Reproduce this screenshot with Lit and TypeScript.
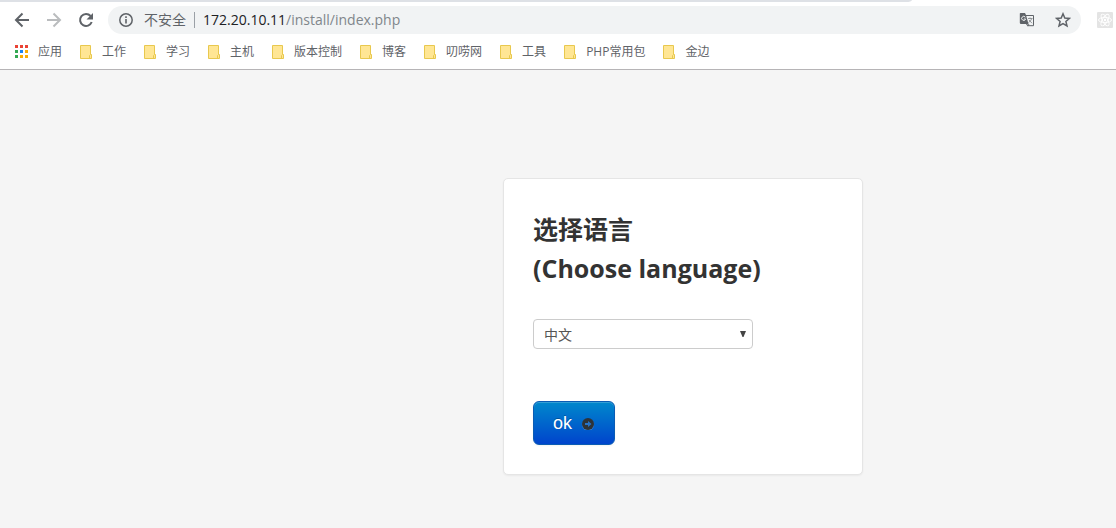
import { LitElement, html, css, svg } from "lit";
import { customElement, property } from "lit/decorators.js";

const FOLDERS = ["工作", "学习", "主机", "版本控制", "博客", "叨唠网", "工具", "PHP常用包", "金边"];

const APP_COLORS = ["#ea4335", "#ea4335", "#ea4335", "#34a853", "#1a83f4", "#fbac04", "#34a853", "#fbac04", "#fbac04"];

@customElement("browser-toolbar")
export class BrowserToolbar extends LitElement {
  @property() host = "";
  @property() path = "";

  static styles = css`
    :host {
      display: block;
      background: #fff;
      color: #5f6368;
      font-family: "Open Sans", "Noto Sans CJK SC", sans-serif;
    }
    .strip {
      width: 912px;
      height: 2px;
      background: #dee1e6;
      border-bottom-right-radius: 6px 2px;
    }
    .row {
      display: flex;
      align-items: center;
      height: 36px;
      padding: 0 3px 0 12px;
    }
    button {
      display: block;
      flex: none;
      padding: 0;
      border: 0;
      background: none;
      color: inherit;
    }
    svg {
      display: block;
    }
    .nav {
      display: flex;
      gap: 12px;
      margin-right: 12px;
    }
    .omnibox {
      display: flex;
      flex: 1;
      align-items: center;
      height: 28px;
      padding: 0 10px;
      border-radius: 14px;
      background: #f1f3f4;
      font-size: 14px;
      line-height: 20px;
      white-space: nowrap;
    }
    .unsafe {
      margin-left: 10px;
      padding-right: 8px;
    }
    .divider {
      width: 1px;
      height: 16px;
      background: #9aa0a6;
    }
    .url {
      flex: 1;
      margin-left: 8px;
      color: #80868b;
    }
    .host {
      color: #202124;
    }
    .actions {
      display: flex;
      gap: 20px;
    }
    .extension {
      margin-left: 16px;
    }
    .bookmarks {
      display: flex;
      gap: 16px;
      align-items: center;
      height: 28px;
      padding: 0 14px 3px;
      border-bottom: 1px solid #b6b4b6;
    }
    .bookmark {
      display: flex;
      gap: 8px;
      align-items: center;
      color: inherit;
      font-size: 12px;
      line-height: 18px;
      text-decoration: none;
      white-space: nowrap;
    }
  `;

  private folderIcon() {
    return html`<svg width="16" height="16" viewBox="0 0 16 16" aria-hidden="true">
      <path d="M2.5 1.5h10v9h1v4h-11z" fill="#ffe694" stroke="#e8c84e" />
      <path d="M11.5 14v-2.5l1-1" fill="none" stroke="#e8c84e" />
    </svg>`;
  }

  private appsIcon() {
    return html`<svg width="16" height="16" viewBox="0 0 16 16" aria-hidden="true">
      ${APP_COLORS.map(
        (c, i) => svg`<rect x=${1 + (i % 3) * 5} y=${1 + Math.floor(i / 3) * 5} width="3" height="3" fill=${c} />`
      )}
    </svg>`;
  }

  render() {
    return html`
      <div class="strip"></div>
      <div class="row">
        <div class="nav">
          <button aria-label="后退">
            <svg width="20" height="20" viewBox="0 0 20 20" fill="none" stroke="#5f6368" stroke-width="2">
              <path d="M17 10H4.500M10.500 3.500L4 10l6.500 6.500" />
            </svg>
          </button>
          <button aria-label="前进" disabled>
            <svg width="20" height="20" viewBox="0 0 20 20" fill="none" stroke="#babcbe" stroke-width="2">
              <path d="M3 10h12.500M9.500 3.500L16 10l-6.500 6.500" />
            </svg>
          </button>
          <button aria-label="重新加载">
            <svg width="20" height="20" viewBox="0 0 20 20">
              <path d="M14.600 6A6 6 0 1 0 15.700 12" fill="none" stroke="#5f6368" stroke-width="2" />
              <path d="M17 3v6.500h-6.500z" fill="#5f6368" />
            </svg>
          </button>
        </div>
        <div class="omnibox">
          <svg width="16" height="16" viewBox="0 0 16 16" aria-hidden="true">
            <circle cx="8" cy="8" r="6.200" fill="none" stroke="#5f6368" stroke-width="1.500" />
            <path d="M7.200 4.300h1.600v1.600H7.200zM7.200 7.100h1.600v4.500H7.200z" fill="#5f6368" />
          </svg>
          <span class="unsafe">不安全</span>
          <span class="divider"></span>
          <span class="url"><span class="host">${this.host}</span>${this.path}</span>
          <div class="actions">
            <button aria-label="翻译此页">
              <svg width="16" height="16" viewBox="0 0 16 16">
                <path d="M7 3.500h7.500v10.200H8.500L7.500 12" fill="#f1f3f4" stroke="#5f6368" />
                <path d="M1.500 1H6l1 2 2.500 9H2a1.200 1.200 0 0 1-1.200-1.200v-9Q.8 1 1.500 1z" fill="#5f6368" />
                <path d="M6.300 5.200A2 2 0 1 0 6.600 7H4.800" fill="none" stroke="#f1f3f4" />
                <path d="M9 6.500h4.500M11 5.500v1M12.800 6.500Q12 9 9.500 10.500M10 8l3 3.200" fill="none" stroke="#7d8185" stroke-width=".8" />
                <path d="M8.300 12.200h2.200L8.800 14.500z" fill="#5f6368" />
              </svg>
            </button>
            <button aria-label="为此页添加书签">
              <svg width="16" height="16" viewBox="0 0 16 16">
                <path
                  d="M8 1.800l1.800 4.200 4.600.4-3.500 3 1.100 4.500L8 11.500l-4 2.400 1.100-4.500-3.500-3 4.600-.4z"
                  fill="none"
                  stroke="#5f6368"
                  stroke-width="1.500"
                />
              </svg>
            </button>
          </div>
        </div>
        <button class="extension" aria-label="扩展程序">
          <svg width="16" height="16" viewBox="0 0 16 16">
            <rect width="16" height="16" rx="1" fill="#e4e4e4" />
            <g fill="none" stroke="#fff" stroke-width=".9">
              <ellipse cx="8" cy="8" rx="6.500" ry="2.600" />
              <ellipse cx="8" cy="8" rx="6.500" ry="2.600" transform="rotate(60 8 8)" />
              <ellipse cx="8" cy="8" rx="6.500" ry="2.600" transform="rotate(120 8 8)" />
            </g>
            <circle cx="8" cy="8" r="1.200" fill="#fff" />
          </svg>
        </button>
      </div>
      <nav class="bookmarks">
        <a class="bookmark" href="#">${this.appsIcon()}<span>应用</span></a>
        ${FOLDERS.map((name) => html`<a class="bookmark" href="#">${this.folderIcon()}<span>${name}</span></a>`)}
      </nav>
    `;
  }
}

@customElement("language-card")
export class LanguageCard extends LitElement {
  static styles = css`
    :host {
      display: block;
      box-sizing: border-box;
      width: 360px;
      padding: 31px 29px 29px;
      border: 1px solid #e5e5e5;
      border-radius: 5px;
      background: #fff;
      box-shadow: 0 1px 2px rgba(0, 0, 0, 0.05);
      color: #333;
      font-family: "Open Sans", "Noto Sans CJK SC", sans-serif;
    }
    h2 {
      margin: 0 0 31px;
      font-size: 25px;
      font-weight: 700;
      line-height: 39px;
      white-space: nowrap;
    }
    .field {
      display: grid;
      width: 220px;
      margin-bottom: 52px;
    }
    select,
    .arrow {
      grid-area: 1 / 1;
    }
    select {
      appearance: none;
      box-sizing: border-box;
      width: 100%;
      height: 30px;
      margin: 0;
      padding: 2px 24px 0 10px;
      border: 1px solid #ccc;
      border-radius: 4px;
      background: #fff;
      color: #555;
      font: 14px/20px "Open Sans", "Noto Sans CJK SC", sans-serif;
    }
    .arrow {
      place-self: center end;
      margin-right: 6px;
      pointer-events: none;
    }
    button {
      display: flex;
      gap: 9px;
      align-items: center;
      box-sizing: border-box;
      height: 44px;
      padding: 0 19px;
      border: 1px solid #0a5cb4;
      border-radius: 6px;
      background: linear-gradient(#08c, #04c);
      box-shadow: inset 0 1px 0 rgba(255, 255, 255, 0.2), 0 1px 2px rgba(0, 0, 0, 0.05);
      color: #fff;
      font: 18px/22px "Liberation Sans", Arial, sans-serif;
      text-shadow: 0 -1px 0 rgba(0, 0, 0, 0.25);
    }
  `;

  render() {
    return html`
      <form @submit=${(e: Event) => e.preventDefault()}>
        <h2><label for="lang">选择语言<br />(Choose language)</label></h2>
        <div class="field">
          <select id="lang">
            <option selected>中文</option>
            <option>English</option>
          </select>
          <svg class="arrow" width="8" height="8" viewBox="0 0 8 8" aria-hidden="true">
            <path d="M1 1h6L4.500 7h-1z" fill="#444" />
          </svg>
        </div>
        <button type="submit">
          <span>ok</span>
          <svg width="14" height="14" viewBox="0 0 14 14" aria-hidden="true">
            <circle cx="7" cy="8.800" r="6" fill="#4388d8" />
            <circle cx="7" cy="8" r="6" fill="#2d3339" />
            <path d="M4 7h3V5l3.500 3L7 11V9H4z" fill="#2672c8" />
          </svg>
        </button>
      </form>
    `;
  }
}

@customElement("app-root")
export class AppRoot extends LitElement {
  static styles = css`
    :host {
      display: flex;
      flex-direction: column;
      min-height: 100vh;
      overflow: hidden;
      background: #f5f5f5;
    }
    .page {
      flex: 1;
      min-width: 1366px;
      padding: 108px 0 40px;
      box-sizing: border-box;
    }
    language-card {
      margin: 0 auto;
    }
  `;

  render() {
    return html`
      <browser-toolbar host="172.20.10.11" path="/install/index.php"></browser-toolbar>
      <main class="page"><language-card></language-card></main>
    `;
  }
}
